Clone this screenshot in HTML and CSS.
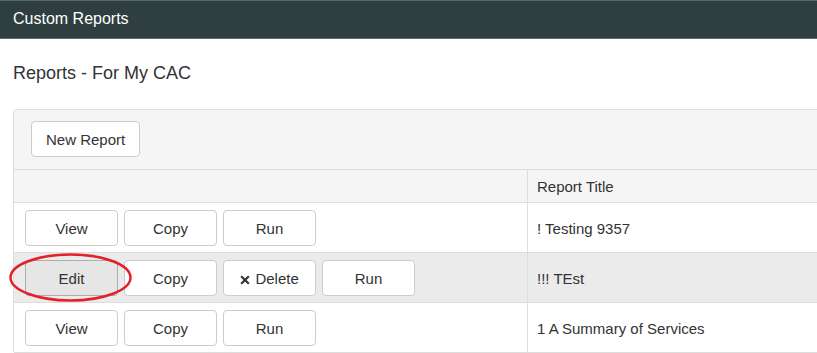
FILE: index.html
```html
<!DOCTYPE html>
<html lang="en">
<head>
    <meta charset="UTF-8">
    <title>Custom Reports</title>
    <link rel="stylesheet" href="styles.css">
</head>
<body>
    <div class="topbar">Custom Reports</div>
    <div class="page">
        <h2 class="page-title">Reports - For My CAC</h2>
        <div class="panel">
            <div class="panel-heading">
                <button class="btn">New Report</button>
            </div>
            <table class="reports">
                <thead>
                    <tr>
                        <th class="actions-col"></th>
                        <th>Report Title</th>
                    </tr>
                </thead>
                <tbody>
                    <tr>
                        <td class="actions-col">
                            <div class="actions">
                                <button class="btn">View</button>
                                <button class="btn">Copy</button>
                                <button class="btn">Run</button>
                            </div>
                        </td>
                        <td>! Testing 9357</td>
                    </tr>
                    <tr class="hover">
                        <td class="actions-col">
                            <div class="actions">
                                <span class="mark-wrap">
                                    <button class="btn active">Edit</button>
                                    <svg class="mark" width="123" height="49" viewBox="0 0 123 49"><ellipse cx="61.5" cy="24.5" rx="60" ry="23" fill="none" stroke="#e4202b" stroke-width="2.5"/></svg>
                                </span>
                                <button class="btn">Copy</button>
                                <button class="btn"><svg class="icon" width="10" height="10" viewBox="0 0 10 10"><path d="M1.2 1.2 L8.8 8.8 M8.8 1.2 L1.2 8.8" stroke="#333" stroke-width="2.2" fill="none"/></svg> Delete</button>
                                <button class="btn">Run</button>
                            </div>
                        </td>
                        <td>!!! TEst</td>
                    </tr>
                    <tr>
                        <td class="actions-col">
                            <div class="actions">
                                <button class="btn">View</button>
                                <button class="btn">Copy</button>
                                <button class="btn">Run</button>
                            </div>
                        </td>
                        <td>1 A Summary of Services</td>
                    </tr>
                </tbody>
            </table>
        </div>
    </div>
</body>
</html>
```

FILE: styles.css
```css
html, body {
    margin: 0;
    padding: 0;
    overflow: hidden;
}
body {
    font-family: "Liberation Sans", Arial, sans-serif;
    font-size: 15px;
    color: #333;
    background: #fff;
}
.topbar {
    height: 37px;
    line-height: 36px;
    background: #2f3f40;
    border-top: 1px solid #56666a;
    border-bottom: 1px solid #5d6c6e;
    color: #fff;
    font-size: 16px;
    padding-left: 13px;
}
.page {
    padding-left: 13px;
}
.page-title {
    font-size: 18px;
    font-weight: normal;
    margin: 23px 0 25px 0;
    line-height: 22px;
}
.panel {
    width: 1000px;
    border: 1px solid #ddd;
    border-radius: 4px;
    background: #fff;
}
.panel-heading {
    background: #f5f5f5;
    padding: 11px 17px 12px 17px;
    border-bottom: 1px solid #ddd;
    border-radius: 4px 4px 0 0;
}
.btn {
    font-family: inherit;
    font-size: 15px;
    color: #333;
    background: #fff;
    border: 1px solid #ccc;
    border-radius: 4px;
    height: 36px;
    padding: 0 14px;
    cursor: pointer;
}
.btn.active {
    background: #e6e6e6;
    border-color: #adadad;
}
.reports {
    width: 100%;
    border-collapse: collapse;
}
.reports th {
    background: #f5f5f5;
    font-weight: normal;
    text-align: left;
    height: 32px;
    padding: 0 9px;
    border-bottom: 1px solid #ddd;
}
.reports td {
    padding: 7px 9px 6px 9px;
    border-top: 1px solid #ddd;
}
.reports tbody tr:first-child td {
    border-top: none;
}
.reports tbody tr:last-child td {
    border-bottom: 1px solid #ddd;
}
.reports .actions-col {
    width: 493px;
    padding-left: 11px;
    border-right: 1px solid #ddd;
}
.reports th.actions-col {
    padding: 0;
}
.reports tr.hover td {
    background: #ebebeb;
}
.actions {
    display: flex;
    gap: 6px;
}
.actions .btn {
    width: 93px;
}
.icon {
    vertical-align: -1px;
    margin-right: 1px;
}
.mark-wrap {
    position: relative;
    display: inline-block;
}
.mark {
    position: absolute;
    left: -16px;
    top: -7px;
    pointer-events: none;
}
```
